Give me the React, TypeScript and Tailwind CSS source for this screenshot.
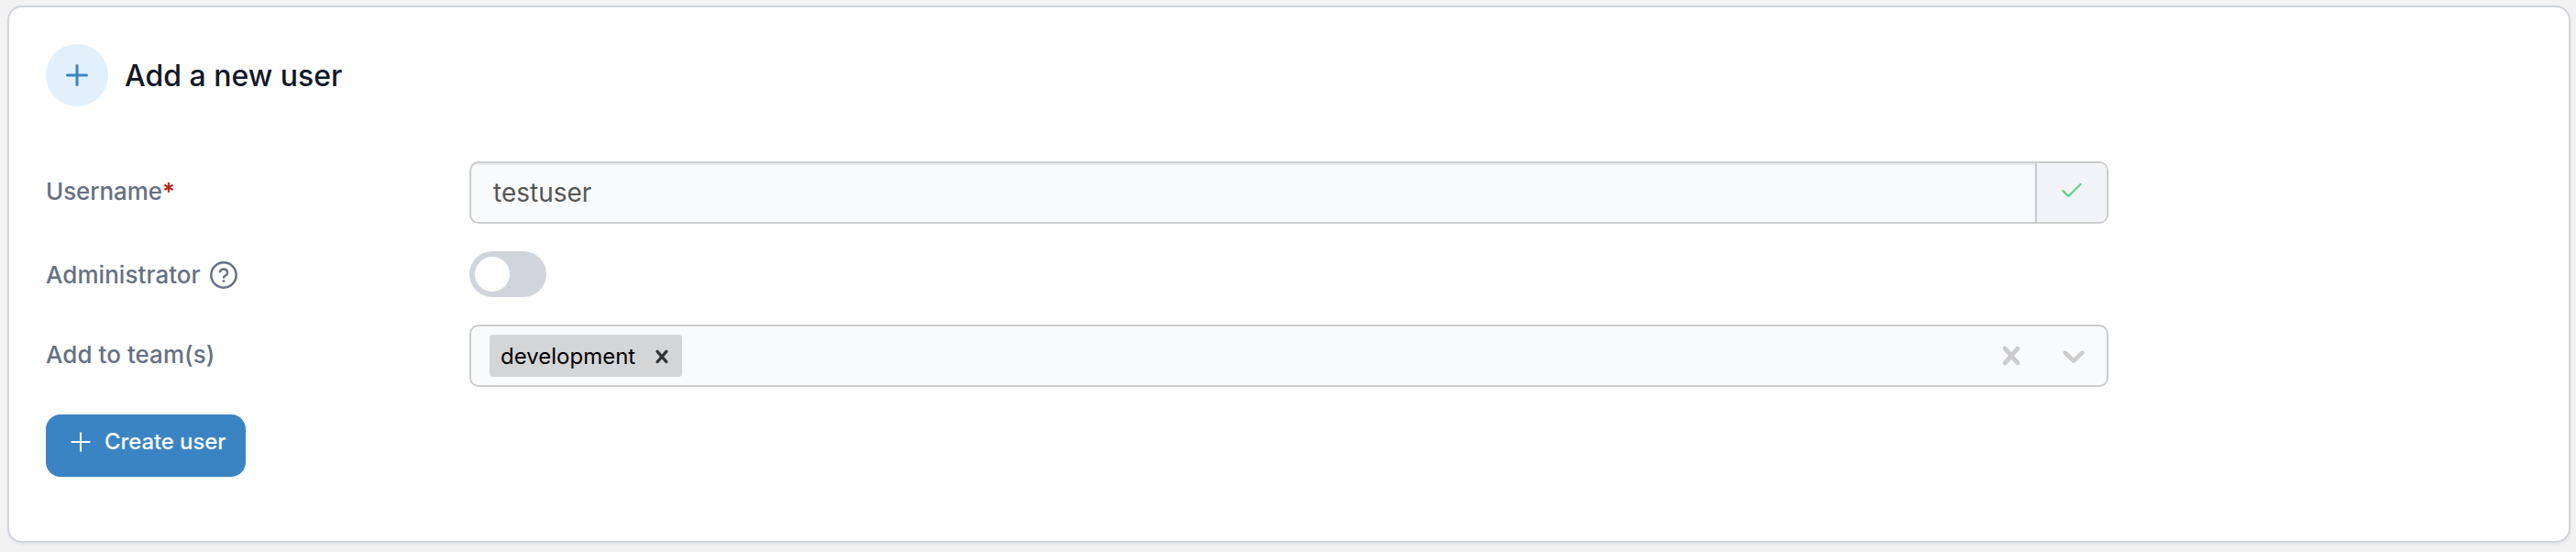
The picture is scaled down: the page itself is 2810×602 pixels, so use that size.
import type { ReactNode } from "react";

function PlusIcon({ className, width }: { className: string; width: number }) {
  return (
    <svg viewBox="0 0 24 24" className={className} fill="none" stroke="currentColor" strokeWidth={width} strokeLinecap="round">
      <path d="M12 1.5v21M1.5 12h21" />
    </svg>
  );
}

function CloseIcon({ className }: { className: string }) {
  return (
    <svg viewBox="0 0 20 20" className={className} fill="currentColor">
      <path d="M14.348 14.849c-0.469 0.469-1.229 0.469-1.697 0l-2.651-3.030-2.651 3.029c-0.469 0.469-1.229 0.469-1.697 0-0.469-0.469-0.469-1.229 0-1.697l2.758-3.15-2.759-3.152c-0.469-0.469-0.469-1.228 0-1.697s1.228-0.469 1.697 0l2.652 3.031 2.651-3.031c0.469-0.469 1.228-0.469 1.697 0s0.469 1.229 0 1.697l-2.758 3.152 2.758 3.15c0.469 0.469 0.469 1.229 0 1.698z" />
    </svg>
  );
}

function ChevronIcon({ className }: { className: string }) {
  return (
    <svg viewBox="0 0 20 20" className={className} fill="currentColor">
      <path d="M4.516 7.548c0.436-0.446 1.043-0.481 1.576 0l3.908 3.747 3.908-3.747c0.533-0.481 1.141-0.446 1.574 0 0.436 0.445 0.408 1.197 0 1.615-0.406 0.418-4.695 4.502-4.695 4.502-0.217 0.223-0.502 0.335-0.787 0.335s-0.57-0.112-0.789-0.335c0 0-4.287-4.084-4.695-4.502s-0.436-1.17 0-1.615z" />
    </svg>
  );
}

function HelpIcon() {
  return (
    <svg viewBox="0 0 32 32" className="ml-[9px] size-8" fill="none" stroke="currentColor" strokeWidth="2.4" strokeLinecap="round" strokeLinejoin="round">
      <circle cx="16" cy="16" r="13.7" />
      <path d="M11.9 12.2a4.3 4.3 0 0 1 8.3 1.4c0 2.8-4.2 3.7-4.2 4.9" />
      <path d="M16 22.6h.01" strokeWidth="2.9" />
    </svg>
  );
}

function Row({ label, className, children }: { label: ReactNode; className: string; children: ReactNode }) {
  return (
    <div className={`flex ${className}`}>
      <div className="flex h-8 w-[462px] shrink-0 items-center text-[26px] leading-8 font-medium text-[#667085]">{label}</div>
      {children}
    </div>
  );
}

export default function App() {
  return (
    <div className="h-[602px] bg-[#f2f2f2] pt-[6px] pr-[6px] pl-2 font-['Inter',sans-serif]">
      <main className="h-[586px] rounded-[16px] border-2 border-[#d0d5dd] bg-white pt-10 pl-10 shadow-[0_2px_4px_rgba(16,24,40,0.06)]">
        <header className="flex h-[68px] items-center">
          <span className="flex size-[68px] items-center justify-center rounded-full bg-[#e2f0fc] text-[#3a84c4]">
            <PlusIcon className="size-6" width={3} />
          </span>
          <h1 className="mt-[2px] ml-[18px] text-[32px] leading-10 font-medium text-[#101828]">Add a new user</h1>
        </header>
        <Row className="mt-[60px] h-[68px] [&>div:first-child]:mt-[17px]" label={<><span className="tracking-[-0.1px]">Username</span><span className="font-semibold text-[#b42318]">*</span></>}>
          <div className="flex h-[68px] w-[1788px] overflow-hidden rounded-[10px] border-2 border-[#cccccc] bg-[#f9fafc]">
            <div className="flex grow items-center pl-6 text-[28px] leading-8 text-[#555555] shadow-[inset_0_2px_2px_rgba(0,0,0,0.075)]">testuser</div>
            <div className="flex w-[78px] items-center justify-center border-l-2 border-[#cccccc] bg-[#f2f4f7] text-[#66d28a]">
              <svg viewBox="0 0 24 24" className="relative -top-[2px] size-6" fill="none" stroke="currentColor" strokeWidth="2.4" strokeLinecap="round" strokeLinejoin="round">
                <path d="M2.5 12.2 8.2 18 21.5 5" />
              </svg>
            </div>
          </div>
        </Row>
        <Row className="mt-[30px] h-[50px] [&>div:first-child]:mt-[10px]" label={<><span className="tracking-[0.05px]">Administrator</span><HelpIcon /></>}>
          <div className="h-[50px] w-[84px] rounded-full bg-[#d0d5dd] p-[6px]">
            <div className="size-[38px] rounded-full bg-white" />
          </div>
        </Row>
        <Row className="mt-[30px] h-[68px] [&>div:first-child]:mt-[17px]" label={<span className="tracking-[0.05px]">Add to team(s)</span>}>
          <div className="flex h-[68px] w-[1788px] items-center rounded-[10px] border-2 border-[#cccccc] bg-[#f9fafc] pl-5 text-[#cccccc]">
            <div className="flex h-[46px] w-[210px] items-center rounded-[4px] bg-[#d4d5d7] pt-px pl-3 text-[24px] leading-8 text-black">
              development
              <CloseIcon className="mr-[8px] ml-auto size-7 text-[#333333]" />
            </div>
            <CloseIcon className="mr-[28px] ml-auto size-10" />
            <ChevronIcon className="mr-4 size-10" />
          </div>
        </Row>
        <button className="mt-[30px] flex h-[68px] w-[218px] items-start rounded-[16px] bg-[#3a84c4] pt-[14px] pl-[27px] text-white">
          <PlusIcon className="mt-[5px] size-[22px]" width={2.2} />
          <span className="ml-[15px] text-[24px] leading-8 font-medium tracking-[-0.1px] whitespace-nowrap">Create user</span>
        </button>
      </main>
    </div>
  );
}
